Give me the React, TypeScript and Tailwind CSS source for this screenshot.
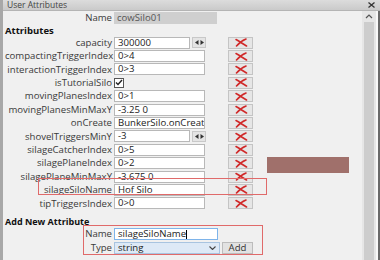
import React from "react";

const F = { fontFamily: '"Open Sans", "Noto Sans", sans-serif' };

function DelBtn() {
  return (
    <div className="w-[25px] h-[12px] bg-[#e6e6e6] border border-[#c4c4c4] flex items-center justify-center">
      <svg width="14" height="9" viewBox="0 0 14 9">
        <path d="M2 1.5 C5 3, 9 6, 12.5 8" stroke="#d02828" strokeWidth="1.6" fill="none" strokeLinecap="round" />
        <path d="M12 1 C8 2.5, 4.5 5.5, 2.5 8" stroke="#d02828" strokeWidth="1.6" fill="none" strokeLinecap="round" />
      </svg>
    </div>
  );
}

function Spin() {
  return (
    <div className="w-[15px] h-[11px] ml-[2px] bg-[#e4e4e4] border border-[#c8c8c8] flex items-center justify-center gap-[1px]">
      <svg width="9" height="5" viewBox="0 0 9 5">
        <path d="M0 2.5 L3.5 0 L3.5 5Z" fill="#333" />
        <path d="M9 2.5 L5.5 0 L5.5 5Z" fill="#333" />
      </svg>
    </div>
  );
}

type Row = { label: string; value?: string; spin?: boolean; check?: boolean };

const rows: Row[] = [
  { label: "capacity", value: "300000", spin: true },
  { label: "compactingTriggerIndex", value: "0>4" },
  { label: "interactionTriggerIndex", value: "0>3" },
  { label: "isTutorialSilo", check: true },
  { label: "movingPlanesIndex", value: "0>1" },
  { label: "movingPlanesMinMaxY", value: "-3.25 0" },
  { label: "onCreate", value: "BunkerSilo.onCreat" },
  { label: "shovelTriggersMinY", value: "-3", spin: true },
  { label: "silageCatcherIndex", value: "0>5" },
  { label: "silagePlaneIndex", value: "0>2" },
  { label: "silagePlaneMinMaxY", value: "-3.675 0" },
  { label: "silageSiloName", value: "Hof Silo" },
  { label: "tipTriggersIndex", value: "0>0" },
];

function AttrRow({ r }: { r: Row }) {
  return (
    <div className="flex items-center h-[13.4px]">
      <div className="w-[109px] text-right pr-[2px] text-[#3a3a3a] leading-none whitespace-nowrap">{r.label}</div>
      <div className="w-[92px] flex items-center">
        {r.check ? (
          <div className="w-[10px] h-[10px] bg-white border border-[#555] flex items-center justify-center">
            <svg width="8" height="7" viewBox="0 0 8 7">
              <path d="M1 3.5 L3 5.5 L7 1" stroke="#222" strokeWidth="1.4" fill="none" />
            </svg>
          </div>
        ) : (
          <>
            <div
              className={`${r.spin ? "w-[84px]" : "w-[91px]"} h-[12px] bg-white border border-[#b8b8b8] pl-[3px] leading-[10px] text-[#222] overflow-hidden whitespace-nowrap`}
            >
              {r.value}
            </div>
            {r.spin && <Spin />}
          </>
        )}
      </div>
      <div className="ml-[22px]">
        <DelBtn />
      </div>
    </div>
  );
}

export default function App() {
  return (
    <div className="w-[380px] h-[260px] overflow-hidden bg-[#f0f0f0] flex text-[9.6px]" style={F}>
      <div className="w-[3px] h-full bg-[#a8a8a8]" />
      <div className="flex-1 flex flex-col">
        <div className="h-[11px] bg-gradient-to-b from-[#dcdcdc] to-[#cacaca] border-b border-[#b4b4b4] flex items-center justify-between pl-[4px] pr-[5px]">
          <span className="text-[#444] text-[8.5px] leading-[10px] whitespace-nowrap">User Attributes</span>
          <svg width="7" height="6" viewBox="0 0 7 6">
            <path d="M0.5 0.5 L6.5 5.5 M6.5 0.5 L0.5 5.5" stroke="#333" strokeWidth="1.3" />
          </svg>
        </div>
        <div className="flex-1 flex">
          <div className="flex-1 relative pl-[2px]">
            <div className="flex items-center h-[12px] mt-[1px]">
              <div className="w-[109px] text-right pr-[2px] text-[#3a3a3a] leading-none">Name</div>
              <div className="w-[103px] h-[12px] bg-[#cfcfcf] px-[3px] leading-[12px] text-[#555]">cowSilo01</div>
            </div>
            <div className="font-bold text-[9.5px] text-[#111] leading-none mt-[2px] h-[10px]">Attributes</div>
            <div>
              {rows.map((r) => (
                <AttrRow key={r.label} r={r} />
              ))}
            </div>
            <div className="font-bold text-[9px] text-[#111] leading-none mt-[7px]">Add New Attribute</div>
            <div className="flex items-center h-[14px] mt-[1px]">
              <div className="w-[109px] text-right pr-[2px] text-[#3a3a3a] leading-none">Name</div>
              <div className="w-[104px] h-[12px] bg-white border border-[#7eb4ea] px-[3px] leading-[10px] text-[#222] flex items-center">
                silageSiloName<span className="w-px h-[9px] bg-black" />
              </div>
            </div>
            <div className="flex items-center h-[14px]">
              <div className="w-[109px] text-right pr-[2px] text-[#3a3a3a] leading-none">Type</div>
              <div className="w-[106px] h-[12px] bg-[#dde9f6] border border-[#a8c4e0] pl-[3px] pr-[3px] leading-[10px] text-[#222] flex items-center justify-between">
                <span>string</span>
                <svg width="7" height="4" viewBox="0 0 7 4">
                  <path d="M0.5 0.5 L3.5 3.5 L6.5 0.5" stroke="#444" strokeWidth="1.1" fill="none" />
                </svg>
              </div>
              <div className="ml-[2px] w-[31px] h-[12px] bg-[#e2e2e2] border border-[#bcbcbc] text-[#333] text-center leading-[10px]">Add</div>
            </div>
            {/* annotation overlays */}
            <div className="absolute left-[35px] top-[167px] w-[229px] h-[17px] border border-[#e06a6a]" />
            <div className="absolute left-[80px] top-[214px] w-[180px] h-[30px] border border-[#e06a6a]" />
            <div className="absolute left-[264px] top-[146px] w-[82px] h-[16px] bg-[#a0706b]" />
          </div>
          <div className="w-[14px] h-full bg-[#e6e6e6] flex flex-col items-center">
            <svg width="8" height="5" viewBox="0 0 8 5" className="mt-[3px]">
              <path d="M1 4 L4 1 L7 4" stroke="#555" strokeWidth="1.2" fill="none" />
            </svg>
            <div className="mt-[3px] w-[10px] flex-1 bg-[#cdcdcd]" />
          </div>
          <div className="w-[4px] h-full bg-[#f8f8f8] border-r-2 border-[#6a6a6a]" />
        </div>
      </div>
    </div>
  );
}
